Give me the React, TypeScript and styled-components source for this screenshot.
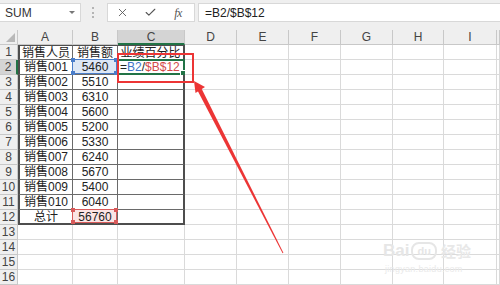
import React from 'react';
import styled, { createGlobalStyle } from 'styled-components';
import { X, Check } from 'lucide-react';

const FONT = `"Liberation Sans", "Noto Sans CJK SC", sans-serif`;

const GlobalStyle = createGlobalStyle`
  html, body { margin: 0; padding: 0; background: #fff; }
  body {
    width: 500px; height: 285px; overflow: hidden;
    font-family: ${FONT};
  }
`;

const Page = styled.div`
  position: relative;
  width: 500px;
  height: 285px;
  overflow: hidden;
  background: #fff;
`;

const Toolbar = styled.div`
  display: flex;
  align-items: flex-start;
  height: 30px;
  box-sizing: border-box;
  padding-top: 3px;
  background: #efefef;
`;

const NameBox = styled.div`
  width: 81px;
  height: 19px;
  box-sizing: border-box;
  background: #fff;
  border: 1px solid #d8d8d8;
  border-left: none;
  display: flex;
  align-items: center;
  justify-content: space-between;
  padding: 0 5px;
  font-size: 12px;
  line-height: 14px;
  color: #333;
`;

const Caret = styled.span`
  width: 0;
  height: 0;
  border-left: 3px solid transparent;
  border-right: 3px solid transparent;
  border-top: 3px solid #777;
`;

const Grip = styled.div`
  width: 2px;
  height: 11px;
  margin: 4px 13px 0 11px;
  display: flex;
  flex-direction: column;
  justify-content: space-between;
`;

const GripDot = styled.span`
  width: 2px;
  height: 2px;
  background: #b4b4b4;
`;

const FuncBox = styled.div`
  width: 88px;
  height: 19px;
  box-sizing: border-box;
  background: #fff;
  border: 1px solid #d8d8d8;
  display: flex;
  align-items: center;
`;

const FuncSlot = styled.div`
  width: 28px;
  height: 100%;
  display: flex;
  align-items: center;
  justify-content: center;
  color: #555;
`;

const Fx = styled.span`
  font: italic 12px/14px "Liberation Serif", "DejaVu Serif", serif;
  color: #555;
  letter-spacing: -0.5px;
`;

const FormulaBox = styled.div`
  flex: 1;
  margin-left: 3px;
  height: 19px;
  box-sizing: border-box;
  background: #fff;
  border: 1px solid #d8d8d8;
  border-right: none;
  padding-left: 6px;
  display: flex;
  align-items: center;
  font-size: 12px;
  line-height: 14px;
  color: #222;
`;

const Sheet = styled.div`
  display: grid;
  grid-template-columns: 18px 55px 45px 67px 52px 52px 52px 52px 51px 53px 1fr;
  grid-auto-rows: 15px;
`;

const Corner = styled.div`
  position: relative;
  background: #efefef;
  border-right: 1px solid #c8c8c8;
  border-bottom: 1px solid #c8c8c8;
  box-sizing: border-box;
`;

const CornerTri = styled.span`
  position: absolute;
  right: 2px;
  bottom: 2px;
  width: 0;
  height: 0;
  border-left: 9px solid transparent;
  border-bottom: 9px solid #b8b8b8;
`;

const ColHead = styled.div<{ $sel?: boolean }>`
  box-sizing: border-box;
  background: ${p => (p.$sel ? '#d4d4d4' : '#efefef')};
  border-right: 1px solid #c8c8c8;
  border-bottom: ${p => (p.$sel ? '2px solid #217346' : '1px solid #c8c8c8')};
  display: flex;
  align-items: center;
  justify-content: center;
  font-size: 12px;
  line-height: 12px;
  color: #444;
`;

const RowHead = styled.div<{ $sel?: boolean }>`
  box-sizing: border-box;
  background: ${p => (p.$sel ? '#d4d4d4' : '#efefef')};
  border-right: ${p => (p.$sel ? '2px solid #217346' : '1px solid #c8c8c8')};
  border-bottom: 1px solid #c8c8c8;
  display: flex;
  align-items: center;
  justify-content: center;
  font-size: 12px;
  line-height: 12px;
  color: #444;
`;

const GridCell = styled.div<{
  $left?: string;
  $top?: string;
  $right?: string;
  $bottom?: string;
  $align?: 'left' | 'center';
  $fill?: string;
}>`
  position: relative;
  box-sizing: border-box;
  background: ${p => p.$fill || '#fff'};
  border-left: ${p => p.$left || 'none'};
  border-top: ${p => p.$top || 'none'};
  border-right: ${p => p.$right || '1px solid #dadada'};
  border-bottom: ${p => p.$bottom || '1px solid #dadada'};
  display: flex;
  align-items: center;
  justify-content: ${p => (p.$align === 'left' ? 'flex-start' : 'center')};
  padding-left: ${p => (p.$align === 'left' ? '2px' : '0')};
  font-size: 12px;
  line-height: 12px;
  color: #222;
  white-space: nowrap;
`;

const RefBox = styled.div<{ $c: string }>`
  position: absolute;
  inset: -1px 0 0 -1px;
  border: 1px solid ${p => p.$c};
  pointer-events: none;
`;

const Handle = styled.span<{ $c: string; $v: 'top' | 'bottom'; $h: 'left' | 'right' }>`
  position: absolute;
  width: 4px;
  height: 4px;
  background: ${p => p.$c};
  ${p => p.$v}: -2px;
  ${p => p.$h}: -2px;
`;

const ActiveBox = styled.div`
  position: absolute;
  inset: -1px -2px -1px -1px;
  border: 2px solid #217346;
  pointer-events: none;
`;

const FillHandle = styled.span`
  position: absolute;
  right: -4px;
  bottom: -4px;
  width: 5px;
  height: 5px;
  background: #217346;
  border: 1px solid #fff;
`;

const Formula = styled.span`
  display: inline-flex;
`;

const Tok = styled.span<{ $c?: string }>`
  color: ${p => p.$c || '#222'};
`;

const Overlay = styled.svg`
  position: absolute;
  left: 0;
  top: 0;
  pointer-events: none;
`;

const Watermark = styled.div`
  position: absolute;
  left: 383px;
  top: 242px;
  display: flex;
  flex-direction: column;
  align-items: flex-start;
  pointer-events: none;
`;

const WmRow = styled.div`
  display: flex;
  align-items: flex-end;
  gap: 2px;
`;

const WmBai = styled.span`
  font: bold 17px/18px "Liberation Sans", sans-serif;
  color: #e6e6e6;
`;

const WmDu = styled.span`
  font: bold 11px/12px "Liberation Sans", sans-serif;
  padding: 1px 4px;
  border: 2px solid #e6e6e6;
  border-radius: 8px;
  color: #e6e6e6;
`;

const WmJy = styled.span`
  font: bold 15px/18px "Noto Sans CJK SC", sans-serif;
  color: #e8e8e8;
  margin-left: 2px;
`;

const WmUrl = styled.span`
  font: 9px/10px "Liberation Sans", sans-serif;
  color: #eaeaea;
  margin-top: 4px;
  margin-left: 2px;
  letter-spacing: 0.3px;
`;

const COLS = ['A', 'B', 'C', 'D', 'E', 'F', 'G', 'H', 'I'];

const DATA: string[][] = [
  ['销售人员', '销售额', '业绩百分比'],
  ['销售001', '5460', ''],
  ['销售002', '5510', ''],
  ['销售003', '6310', ''],
  ['销售004', '5600', ''],
  ['销售005', '5200', ''],
  ['销售006', '5330', ''],
  ['销售007', '6240', ''],
  ['销售008', '5670', ''],
  ['销售009', '5400', ''],
  ['销售010', '6040', ''],
  ['总计', '56760', ''],
];

const OUTER = '2px solid #4e4e4e';
const INNER = '1px solid #6a6a6a';

function RefMark({ c }: { c: string }) {
  return (
    <RefBox $c={c}>
      <Handle $c={c} $v="top" $h="left" />
      <Handle $c={c} $v="top" $h="right" />
      <Handle $c={c} $v="bottom" $h="left" />
      <Handle $c={c} $v="bottom" $h="right" />
    </RefBox>
  );
}

function renderCell(r: number, c: number) {
  const key = `${r}-${c}`;
  const inTable = r < 12 && c < 3;
  if (!inTable) return <GridCell key={key} />;
  const text = DATA[r][c];
  const isB2 = r === 1 && c === 1;
  const isB12 = r === 11 && c === 1;
  const isC2 = r === 1 && c === 2;
  return (
    <GridCell
      key={key}
      $left={c === 0 ? OUTER : undefined}
      $top={r === 0 ? '1px solid #4e4e4e' : undefined}
      $right={c === 2 ? OUTER : INNER}
      $bottom={r === 11 ? OUTER : INNER}
      $align={isC2 ? 'left' : 'center'}
      $fill={isB2 ? '#dde7f5' : isB12 ? '#fbe4e4' : undefined}
    >
      {isC2 ? (
        <>
          <Formula>
            <Tok>=</Tok>
            <Tok $c="#3f74c8">B2</Tok>
            <Tok>/</Tok>
            <Tok $c="#d24a4a">$B$12</Tok>
          </Formula>
          <ActiveBox>
            <FillHandle />
          </ActiveBox>
        </>
      ) : (
        text
      )}
      {isB2 && <RefMark c="#4a7dc9" />}
      {isB12 && <RefMark c="#d85a5a" />}
    </GridCell>
  );
}

export default function App() {
  const rows = Array.from({ length: 16 }, (_, i) => i);
  return (
    <Page>
      <GlobalStyle />
      <Toolbar>
        <NameBox>
          SUM
          <Caret />
        </NameBox>
        <Grip>
          <GripDot />
          <GripDot />
          <GripDot />
        </Grip>
        <FuncBox>
          <FuncSlot>
            <X size={13} strokeWidth={1.6} />
          </FuncSlot>
          <FuncSlot>
            <Check size={13} strokeWidth={2} />
          </FuncSlot>
          <FuncSlot>
            <Fx>fx</Fx>
          </FuncSlot>
        </FuncBox>
        <FormulaBox>=B2/$B$12</FormulaBox>
      </Toolbar>
      <Sheet>
        <Corner>
          <CornerTri />
        </Corner>
        {COLS.map(col => (
          <ColHead key={col} $sel={col === 'C'}>
            {col}
          </ColHead>
        ))}
        <ColHead />
        {rows.map(r => (
          <React.Fragment key={r}>
            <RowHead $sel={r === 1}>{r + 1}</RowHead>
            {Array.from({ length: 10 }, (_, c) => renderCell(r, c))}
          </React.Fragment>
        ))}
      </Sheet>
      <Overlay width={500} height={285} viewBox="0 0 500 285">
        <rect x={118} y={54} width={75} height={28} fill="none" stroke="#ec3535" strokeWidth={2} />
        <polygon points="194,81 195.5,93 205,87" fill="#ec3535" />
        <polygon points="197.5,90.5 201.5,88.5 283.4,252.8 282.6,253.2" fill="#ec3535" />
      </Overlay>
      <Watermark>
        <WmRow>
          <WmBai>Bai</WmBai>
          <WmDu>du</WmDu>
          <WmJy>经验</WmJy>
        </WmRow>
        <WmUrl>jingyan.baidu.com</WmUrl>
      </Watermark>
    </Page>
  );
}
